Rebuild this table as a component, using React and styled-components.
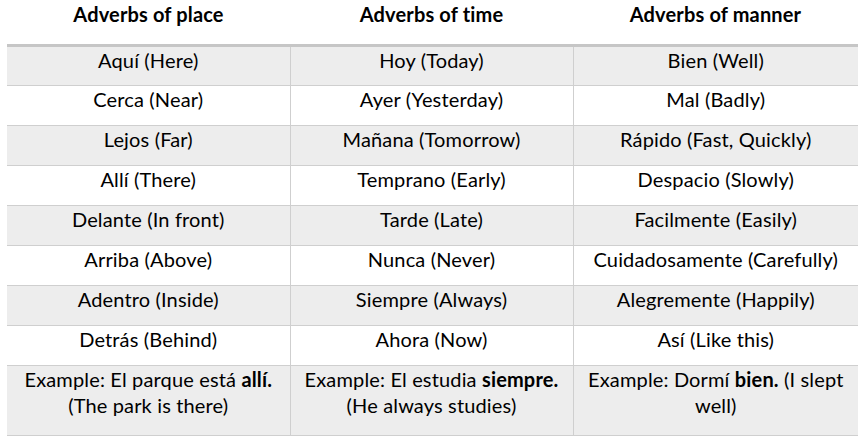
import React from "react";
import styled, { createGlobalStyle } from "styled-components";

const GlobalStyle = createGlobalStyle`
    body {
        margin: 0;
        background: #ffffff;
        font-family: "Lato", "Liberation Sans", sans-serif;
        color: #000000;
    }
`;

const Wrap = styled.div`
    padding-left: 7px;
    width: 851px;
`;

const Table = styled.table`
    width: 851px;
    border-collapse: collapse;
    table-layout: fixed;
    font-size: 20px;
    letter-spacing: 0.15px;
    line-height: 26px;
`;

const HeadCell = styled.th`
    height: 45px;
    padding: 1px 4px 0;
    box-sizing: border-box;
    vertical-align: top;
    text-align: center;
    font-weight: 700;
    border-bottom: 3px solid #c6c6c6;
`;

const Row = styled.tr`
    background: ${(p) => (p.$shaded ? "#ededed" : "#ffffff")};
`;

const Cell = styled.td`
    height: ${(p) => (p.$tall ? "70px" : "40px")};
    padding: 0 4px;
    box-sizing: border-box;
    vertical-align: top;
    text-align: center;
    white-space: nowrap;
    border-bottom: 1px solid #cfcfcf;
    & + & {
        border-left: 1px solid #cfcfcf;
    }
    b {
        font-weight: 700;
    }
`;

const rows = [
    ["Aquí (Here)", "Hoy (Today)", "Bien (Well)"],
    ["Cerca (Near)", "Ayer (Yesterday)", "Mal (Badly)"],
    ["Lejos (Far)", "Mañana (Tomorrow)", "Rápido (Fast, Quickly)"],
    ["Allí (There)", "Temprano (Early)", "Despacio (Slowly)"],
    ["Delante (In front)", "Tarde (Late)", "Facilmente (Easily)"],
    ["Arriba (Above)", "Nunca (Never)", "Cuidadosamente (Carefully)"],
    ["Adentro (Inside)", "Siempre (Always)", "Alegremente (Happily)"],
    ["Detrás (Behind)", "Ahora (Now)", "Así (Like this)"],
];

export default function App() {
    return (
        <Wrap>
            <GlobalStyle />
            <Table>
                <colgroup>
                    <col style={{ width: 283 }} />
                    <col style={{ width: 283 }} />
                    <col style={{ width: 285 }} />
                </colgroup>
                <thead>
                    <tr>
                        <HeadCell>Adverbs of place</HeadCell>
                        <HeadCell>Adverbs of time</HeadCell>
                        <HeadCell>Adverbs of manner</HeadCell>
                    </tr>
                </thead>
                <tbody>
                    {rows.map((r, i) => (
                        <Row key={i} $shaded={i % 2 === 0}>
                            {r.map((c) => (
                                <Cell key={c}>{c}</Cell>
                            ))}
                        </Row>
                    ))}
                    <Row $shaded>
                        <Cell $tall>
                            Example: El parque está <b>allí.</b>
                            <br />
                            (The park is there)
                        </Cell>
                        <Cell $tall>
                            Example: El estudia <b>siempre.</b>
                            <br />
                            (He always studies)
                        </Cell>
                        <Cell $tall>
                            Example: Dormí <b>bien.</b> (I slept
                            <br />
                            well)
                        </Cell>
                    </Row>
                </tbody>
            </Table>
        </Wrap>
    );
}
